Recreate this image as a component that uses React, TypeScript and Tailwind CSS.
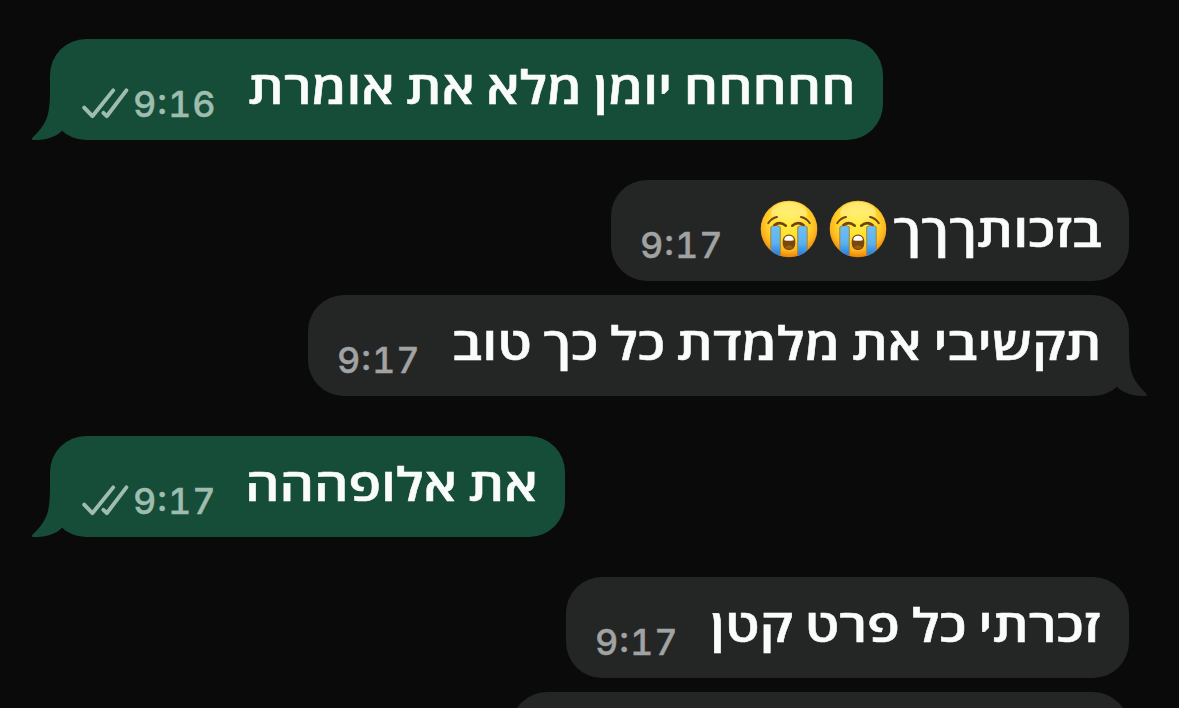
import React from "react";

type Message = {
  id: number;
  text: string;
  time: string;
  sent: boolean;
  tail: boolean;
  width: string;
  gap: string;
  stretch: string;
  crying?: number;
};

const messages: Message[] = [
  { id: 1, text: "חחחחח יומן מלא את אומרת", time: "9:16", sent: true, tail: true, width: "w-[833px]", gap: "mt-[39px]", stretch: "mt-[12px] mr-[27px] scale-x-[1.162]" },
  { id: 2, text: "בזכותךךך", time: "9:17", sent: false, tail: false, width: "w-[518px]", gap: "mt-10", stretch: "mt-[14px] mr-[27px] scale-x-[1.178]", crying: 2 },
  { id: 3, text: "תקשיבי את מלמדת כל כך טוב", time: "9:17", sent: false, tail: true, width: "w-[821px]", gap: "mt-3.5", stretch: "mt-[12px] mr-[27px] scale-x-[1.177]" },
  { id: 4, text: "את אלופההה", time: "9:17", sent: true, tail: true, width: "w-[515px]", gap: "mt-10", stretch: "mt-[12px] mr-[27px] scale-x-[1.168]" },
  { id: 5, text: "זכרתי כל פרט קטן", time: "9:17", sent: false, tail: false, width: "w-[563px]", gap: "mt-10", stretch: "mt-[12px] mr-[29px] scale-x-[1.177]" },
  { id: 6, text: "", time: "", sent: false, tail: false, width: "w-[618px]", gap: "mt-3.5", stretch: "" },
];

function Ticks() {
  return (
    <svg className="ml-8 mt-[49px] h-[32px] w-[48px] shrink-0" viewBox="0 0 48 32" fill="none" stroke="#9fbdaf" strokeWidth="3.9" strokeLinecap="round" strokeLinejoin="round">
      <path d="M2.2 19.6 10.4 28.2 31.2 2.4" />
      <path d="M21.4 24.8 24.8 28.2 44.4 2.4" />
    </svg>
  );
}

function Tail({ sent }: { sent: boolean }) {
  return (
    <svg
      className={sent ? "absolute -left-5 top-0 h-[101px] w-10 text-[#154d38]" : "absolute -right-5 top-0 h-[101px] w-10 -scale-x-100 text-[#242626]"}
      viewBox="-20 0 40 101"
      fill="currentColor"
    >
      <path d="M0 36C0 72 1 81-17.5 98.7C-18.8 100-18 101-16.5 101C-5 101.4 5 98.5 11.5 92.2L18 84V36Z" />
    </svg>
  );
}

function CryingFace() {
  return (
    <svg className="h-[58px] w-[58px] shrink-0" viewBox="0 0 58 58" role="img" aria-label="😭">
      <defs>
        <radialGradient id="skin" cx=".5" cy=".4" r=".6">
          <stop offset="0" stopColor="#ffee3d" />
          <stop offset=".55" stopColor="#ffdc2e" />
          <stop offset=".8" stopColor="#fdb71e" />
          <stop offset="1" stopColor="#ec7f08" />
        </radialGradient>
        <linearGradient id="shine" x1="0" y1="0" x2="0" y2="1">
          <stop offset="0" stopColor="#fff6b0" stopOpacity=".5" />
          <stop offset=".5" stopColor="#fffbb8" stopOpacity=".45" />
          <stop offset="1" stopColor="#fff" stopOpacity="0" />
        </linearGradient>
        <linearGradient id="tears" x1="0" y1="0" x2="0" y2="1">
          <stop offset="0" stopColor="#70bff4" />
          <stop offset=".55" stopColor="#5bb1f0" />
          <stop offset="1" stopColor="#1673db" />
        </linearGradient>
        <clipPath id="face"><circle cx="29" cy="29" r="28.3" /></clipPath>
      </defs>
      <circle cx="29" cy="29" r="28.3" fill="url(#skin)" />
      <ellipse cx="29" cy="13" rx="18" ry="11" fill="url(#shine)" />
      <g clipPath="url(#face)">
        <path d="M10.8 27Q15 23.8 20.3 27V58H10.8ZM37.7 27Q43 23.8 47.2 27V58H37.7Z" fill="url(#tears)" stroke="#a8843a" strokeWidth="1" />
      </g>
      <g fill="none" stroke="#704214" strokeLinecap="round">
        <path d="M8.2 23.2Q11.5 18 17 17M49.8 23.2Q46.5 18 41 17" strokeWidth="1.9" />
        <path d="M14.5 25Q20 20.8 25.8 25.7M43.5 25Q38 20.8 32.2 25.7" strokeWidth="2.6" />
      </g>
      <path d="M22.7 41.5C22.7 37.5 25.2 34.5 29 34.5S35.3 37.5 35.3 41.5V43C35.3 47.4 32.7 50 29 50S22.7 47.4 22.7 43Z" fill="#7b4706" />
      <path d="M24.2 40.3C24.2 37.3 25.8 35.7 29 35.7S33.8 37.3 33.8 40.3Q29 41.3 24.2 40.3Z" fill="#fff" />
      <path d="M25 47.4Q29 43 33 47.4Q29 50 25 47.4Z" fill="#93601c" />
    </svg>
  );
}

function Bubble({ m }: { m: Message }) {
  return (
    <div className={`${m.width} ${m.gap} ${m.sent ? "ml-[50px] self-start bg-[#154d38]" : "mr-[50px] self-end bg-[#242626]"} relative flex h-[101px] shrink-0 items-start rounded-[36px]`}>
      {m.tail && <Tail sent={m.sent} />}
      {m.text !== "" && (
        <>
          {m.sent && <Ticks />}
          <span className={`${m.sent ? "ml-[3px] text-[#9fbdaf]" : "ml-[29px] text-[#a1a2a2]"} mt-[43px] whitespace-nowrap font-['Inter',sans-serif] text-[36px] font-medium leading-[44px] tracking-[1px] [-webkit-text-stroke:0.35px_currentColor] [font-feature-settings:'case','tnum']`}>
            {m.time}
          </span>
          <div dir="rtl" className="ml-auto flex items-start">
            <span className={`${m.stretch} origin-right whitespace-nowrap font-['Open_Sans',sans-serif] text-[46px] font-semibold leading-[70px] text-[#fafcfb] [word-spacing:-2px] [-webkit-text-stroke:0.5px_currentColor]`}>{m.text}</span>
            {m.crying && (
              <span className="mr-[38px] mt-5 flex gap-[11px]">
                {Array.from({ length: m.crying }, (_, i) => <CryingFace key={i} />)}
              </span>
            )}
          </div>
        </>
      )}
    </div>
  );
}

export default function App() {
  return (
    <main className="flex h-[708px] w-[1179px] flex-col overflow-hidden bg-[#0a0a0a]">
      {messages.map((m) => <Bubble key={m.id} m={m} />)}
    </main>
  );
}
